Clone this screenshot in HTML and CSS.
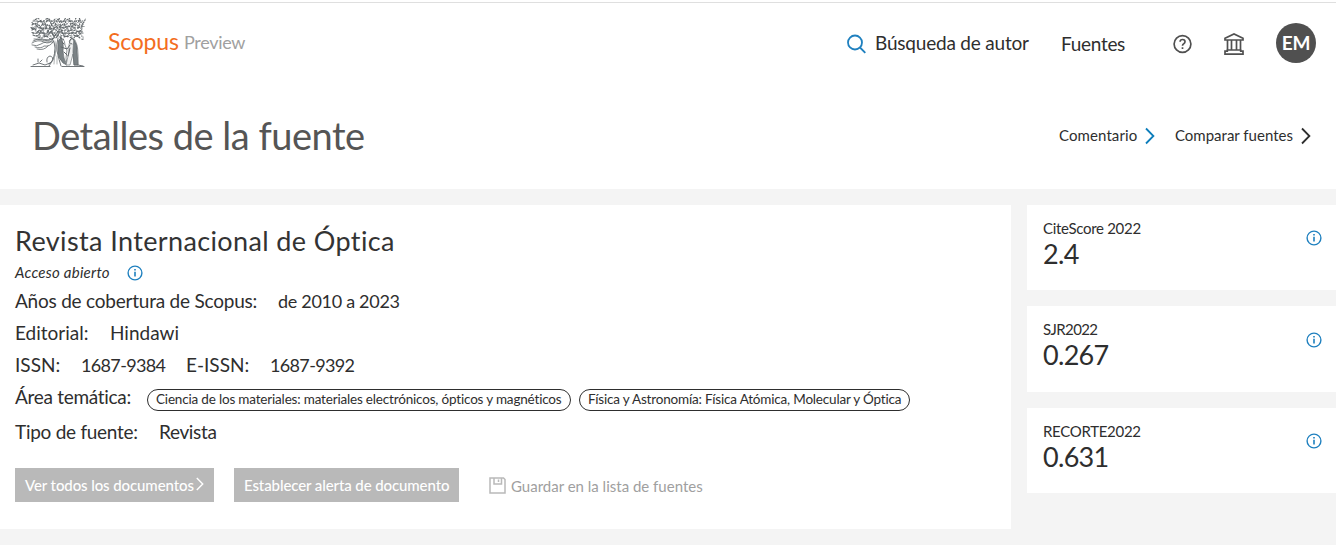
FILE: index.html
```html
<!DOCTYPE html>
<html lang="es">
<head>
<meta charset="utf-8">
<title>Detalles de la fuente</title>
<link rel="stylesheet" href="styles.css">
</head>
<body>
<svg width="0" height="0" class="defs">
  <symbol id="info" viewBox="0 0 16 16"><circle cx="8" cy="8" r="6.9" fill="none" stroke="#1f80bf" stroke-width="1.4"/><path d="M8 6.8v4.7M8 4v1.5" stroke="#1f80bf" stroke-width="1.6"/></symbol>
  <symbol id="chev" viewBox="0 0 10 18"><path d="M1 1.5 8.4 9 1 16.500" fill="none" stroke="currentColor" stroke-width="1.8"/></symbol>
</svg>
<header class="top">
  <svg class="tree" viewBox="0 0 56 50" fill="none" stroke="#62686b" stroke-linecap="round">
    <g stroke-width="1.1" stroke-dasharray="2 1.500 1 1.800">
      <path d="M5 2q3-3 5 0t5 0 5 0 5-1 5 1 5-1 5 1 5 0 5 0 5 0 2 1"/>
      <path d="M2 4.500q2 3 5 0t5 1 4-1 5 1 5-1 4 1 5 0 5-1 5 1 4-1 5 1"/>
      <path d="M2 7q3-3 5 1t5-1 4 1 5 0 5-1 5 1 4-1 5 1 5-1 5 1 4 0"/>
      <path d="M1 9.500q3 3 5-1t5 1 5 0 4-1 5 1 5-1 5 1 5-1 4 1 5 0 5-1"/>
      <path d="M2 12q3-2 5 1t5-1 5 0 5 1 4-1 5 1 5-1 5 0 5 1 6-1"/>
      <path d="M2 14.500q4 2 6-1t5 1 5-1 4 1 5 0 5-1 5 1 5-1 5 1 5-1"/>
      <path d="M3 17q4 2 6-1t5 1 5-1 4 1 5 0 5-1 5 1 5-1 5 1 3-1"/>
      <path d="M8 19q4 2 6 0t5 1 5-1 6 0 4 1 5-1 6 0 5 1 3-1"/>
      <path d="M3 3h50M2 10h52M3 15h50M6 18h46" stroke-dasharray="1 2.500"/>
    </g>
    <g stroke-width=".6" stroke-dasharray="2.500 1.500"><path d="M4 2l3 4 4-4 3 5 4-6 4 5 4-4 3 5 5-5 3 4 4-4 4 5 5-5 2 3M3 9l4 6 4-5 4 6 5-6 4 6 4-6 5 6 4-6 4 6 4-5 5 4 2-4M2 12l5-6 5 6 5-6 5 6 5-6 5 6 5-6 5 6 5-6 5 6M8 18l4-4 4 4 4-4 4 4 4-4 4 4 4-4 4 4 4-4 4 4 4-4"/></g>
    <g stroke-width=".8"><path d="M3 23q4-3 9-1t12-2M2 25q6-4 12-1t9-3M2 27q5 2 9-1t12-2M5 29q6 2 9-1 6 1 9-4M7 31q7 2 11-3M4 21q9 0 16 1"/></g>
    <path d="M22 20q3 5 3 10t-2 12l-4 6M28 20q-2 7-1 13 2 9 4 15" stroke-width=".9"/>
    <path d="M25 23q2 8 0 15M25 33l-1 13M27 38v8" stroke-width=".5"/>
    <path d="M31 20q-3 1-3 6v8q0 6 5 11l4 2q-4-7-4-14 1-9-2-13z" fill="#7b8285" stroke-width=".7"/>
    <path d="M33 21q2 2 2 6l2 5-1 8 1 6" stroke-width=".7"/>
    <path d="M41 21q-3 5-2 13l-3 13h4l3-11 1 11h4q1-19-3-25z" fill="#f0f1f1" stroke-width=".6"/>
    <path d="M44 22q4 5 3 12l1 13h-4l-1-13z" fill="#7b8285" stroke-width=".7"/>
    <path d="M44 22q-2-3-4 0t2 4M32 24l2 2M31 29l6 2 3-4M34 34l3 3M40 30l-2 8" stroke-width="1"/>
    <path d="M1 48.500h19M3 47l6-2 6 2 5-2M8 44v-3M10 44l2-2M17 44q-1-5 3-6 4 1 2 5l-3 3M32 48.500h22M48 47l5 1" stroke-width=".9"/>
  </svg>
  <div class="brand">Scopus</div><div class="preview">Preview</div>
  <nav class="nav">
    <svg class="search" viewBox="0 0 20 20" fill="none" stroke="#1f80bf" stroke-width="1.800"><circle cx="8" cy="8.500" r="7"/><path d="m13 13.500 5.300 5.300"/></svg>
    <a class="author">Búsqueda de autor</a>
    <a class="sources">Fuentes</a>
    <svg class="help" viewBox="0 0 20 20" fill="none" stroke="#505050" stroke-width="1.700"><circle cx="10.500" cy="10" r="8.400"/><path d="M8.100 7.800q0-2.300 2.500-2.300t2.400 2.200q0 1.200-1.300 2-1.200.7-1.200 2M10.500 13.200v1.700"/></svg>
    <svg class="bank" viewBox="0 0 20 22" fill="none" stroke="#505050" stroke-width="1.700"><path d="M1 7V5.200L10 1l9 4.200V7zM3.500 7v10M7.500 7v10M12.500 7v10M16.500 7v10M3.300 17h13.400v1.200H19v2.900H1v-2.900h2.300z"/></svg>
    <span class="avatar">EM</span>
  </nav>
</header>
<section class="heading">
  <h1>Detalles de la fuente</h1>
  <a class="comment">Comentario</a><svg class="chev blue"><use href="#chev"/></svg>
  <a class="compare">Comparar fuentes</a><svg class="chev"><use href="#chev"/></svg>
</section>
<main class="content">
  <article class="journal">
    <h2>Revista Internacional de Óptica</h2>
    <div class="open"><em>Acceso abierto</em><svg class="info"><use href="#info"/></svg></div>
    <div class="row"><span class="l-years">Años de cobertura de Scopus:</span><span class="v-years">de 2010 a 2023</span></div>
    <div class="row"><span class="l-pub">Editorial:</span><span class="v-pub">Hindawi</span></div>
    <div class="row"><span class="l-issn">ISSN:</span><span class="v-issn">1687-9384</span><span class="l-eissn">E-ISSN:</span><span class="v-issn">1687-9392</span></div>
    <div class="row area"><span class="l-area">Área temática:</span><span class="tag tag-a">Ciencia de los materiales: materiales electrónicos, ópticos y magnéticos</span><span class="tag tag-b">Física y Astronomía: Física Atómica, Molecular y Óptica</span></div>
    <div class="row"><span class="l-type">Tipo de fuente:</span><span class="v-type">Revista</span></div>
    <div class="actions">
      <button class="btn all"><span>Ver todos los documentos</span><svg class="chev small"><use href="#chev"/></svg></button>
      <button class="btn alert"><span>Establecer alerta de documento</span></button>
      <svg class="save" viewBox="0 0 17 17" fill="none" stroke="#b9b9b9" stroke-width="1.500"><path d="M1 1h13.500l1.500 1.500V16H1zM5 1v6h7.500V1M9.500 2.500v2.500"/></svg>
      <span class="savetext">Guardar en la lista de fuentes</span>
    </div>
  </article>
  <aside class="metrics">
    <div class="metric"><div><div class="name">CiteScore 2022</div><div class="value">2.4</div></div><svg class="info"><use href="#info"/></svg></div>
    <div class="metric mid"><div><div class="name sjr">SJR2022</div><div class="value">0.267</div></div><svg class="info"><use href="#info"/></svg></div>
    <div class="metric"><div><div class="name">RECORTE2022</div><div class="value">0.631</div></div><svg class="info"><use href="#info"/></svg></div>
  </aside>
</main>
</body>
</html>
```
FILE: styles.css
```css
* { box-sizing: border-box; }
html { background: #fff; }
body { margin: 0; height: 545px; overflow: hidden; background: #fff; color: #2e2e2e; font-family: Lato, "Noto Sans", sans-serif; white-space: nowrap; }
.defs { display: block; height: 0; }
svg { flex: none; display: block; }
.top { height: 84px; background: linear-gradient(#fff 0 2px, #dfdfdf 2px 3px, #fff 3px); display: flex; align-items: flex-start; padding: 0 20px 0 30px; }
.tree { width: 56px; height: 50px; margin-top: 18px; }
.brand { margin: 25px 0 0 22px; width: 76px; color: #f36d21; font-size: 23px; line-height: 32px; letter-spacing: -.2px; }
.preview { margin-top: 27px; color: #a0a0a0; font-size: 18px; line-height: 30px; letter-spacing: -.3px; }
.nav { margin-left: auto; display: flex; align-items: flex-start; font-size: 19px; line-height: 28px; letter-spacing: -.2px; }
.search { width: 20px; height: 20px; margin: 34px 8px 0 0; }
.author { width: 154px; margin: 29px 32px 0 0; }
.sources { width: 64px; margin: 30px 47px 0 0; letter-spacing: -.3px; }
.help { width: 20px; height: 20px; margin: 34px 32px 0 0; }
.bank { width: 20px; height: 22px; margin: 33px 32px 0 0; }
.avatar { width: 40px; height: 40px; margin-top: 23px; border-radius: 50%; background: #505050; color: #fff; font-weight: 700; font-size: 19px; line-height: 39px; text-align: center; }
.heading { height: 105px; background: #fff; display: flex; align-items: flex-start; padding: 0 25px 0 32px; font-size: 15px; line-height: 24px; }
h1 { margin: 26px auto 0 0; font-size: 38px; line-height: 51px; font-weight: 400; color: #555; letter-spacing: -.5px; }
.comment { width: 78px; margin-top: 39px; letter-spacing: .1px; }
.compare { width: 118px; margin-top: 39px; }
.chev { width: 10px; height: 18px; margin: 43px 0 0 8px; }
.blue { color: #0c7dbb; margin-right: 20px; }
.content { height: 356px; padding-top: 16px; background: #f4f4f4; display: flex; gap: 16px; align-items: flex-start; }
.journal { width: 1011px; height: 324px; background: #fff; padding: 15px 15px; }
h2 { margin: 0; font-size: 27px; line-height: 41px; font-weight: 400; color: #333; letter-spacing: .38px; }
.open { height: 24px; display: flex; align-items: center; font-size: 15px; letter-spacing: .25px; }
.open em { width: 112px; margin-top: -2px; }
.info { width: 16px; height: 16px; }
.row { display: flex; height: 32px; align-items: center; font-size: 19px; line-height: 28px; }
.l-years { width: 263px; letter-spacing: -.22px; }
.v-years { font-size: 18px; letter-spacing: -.3px; }
.l-pub { width: 95px; }
.l-issn { width: 66px; }
.v-issn { width: 105px; font-size: 18px; letter-spacing: -.65px; }
.l-eissn { width: 84px; }
.l-area { width: 132px; letter-spacing: -.3px; }
.l-type { width: 144px; letter-spacing: -.27px; }
.v-type { letter-spacing: -.35px; }
.area { height: 35px; padding-bottom: 3px; }
.tag { height: 22px; border: 1px solid #2e2e2e; border-radius: 11px; padding: 0 8px; font-size: 13.5px; line-height: 18px; letter-spacing: -.18px; margin-top: 5px; }
.tag-a { width: 424px; margin-right: 8px; }
.tag-b { width: 331px; }
.actions { display: flex; margin-top: 20px; align-items: flex-start; font-size: 15px; }
.btn { height: 34px; border: 0; padding: 0 10px; background: #b9b9b9; color: #fff; font: 500 15px/34px Lato, "Noto Sans", sans-serif; letter-spacing: -.1px; display: flex; }
.all { width: 199px; margin-right: 20px; }
.alert { width: 225px; margin-right: 30px; }
.all span { width: 171px; text-align: left; }
.small { margin: 8px 0 0 0; width: 8px; height: 16px; }
.save { width: 17px; height: 17px; margin: 9px 5px 0 0; }
.savetext { color: #a0a0a0; line-height: 36px; }
.metrics { width: 309px; display: flex; flex-direction: column; gap: 16px; }
.metric { height: 85px; background: #fff; padding: 13px 14px 0 16px; display: flex; justify-content: space-between; }
.mid { height: 86px; }
.metric .info { margin-top: 12px; }
.mid .info { margin-top: 13px; }
.name { font-size: 15px; line-height: 20px; letter-spacing: -.3px; }
.sjr { letter-spacing: -.6px; }
.value { font-size: 27px; line-height: 31px; letter-spacing: -.7px; }
```
